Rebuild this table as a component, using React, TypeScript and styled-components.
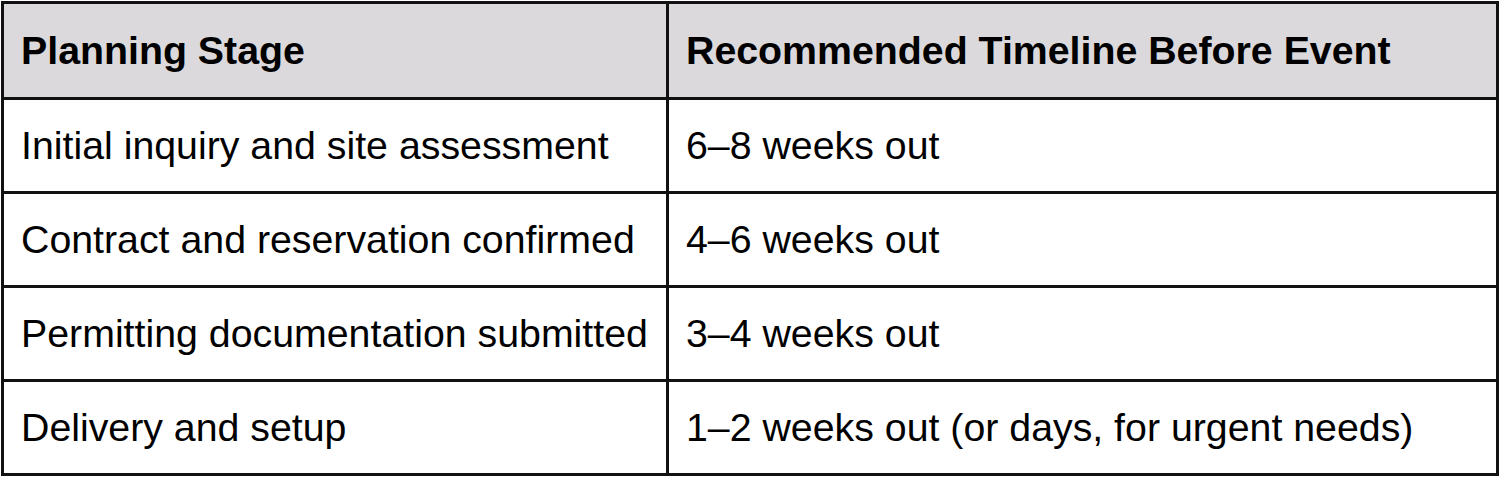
import React from "react";
import styled, { createGlobalStyle } from "styled-components";

const Global = createGlobalStyle`
  html, body { margin: 0; padding: 0; background: #ffffff; }
  body { font-family: "Liberation Sans", Arial, sans-serif; color: #000; }
`;

const Page = styled.div`
  padding: 1px 0 0 1px;
`;

const Table = styled.table`
  border-collapse: separate;
  border-spacing: 0;
  border-top: 3px solid #111111;
  border-left: 3px solid #111111;
  table-layout: fixed;
  width: 1498px;
`;

const Col = styled.col<{ $w: number }>`
  width: ${(p) => p.$w}px;
`;

const HeadCell = styled.th`
  background: #dbd9dc;
  height: 93px;
  padding: 0 0 0 17px;
  text-align: left;
  vertical-align: middle;
  font-size: 39.3px;
  font-weight: 700;
  border-right: 3px solid #111111;
  border-bottom: 3px solid #111111;
  box-sizing: content-box;
  white-space: nowrap;
`;

const Cell = styled.td`
  height: 91px;
  padding: 0 0 0 17px;
  text-align: left;
  vertical-align: middle;
  font-size: 39.3px;
  font-weight: 400;
  border-right: 3px solid #111111;
  border-bottom: 3px solid #111111;
  box-sizing: content-box;
  white-space: nowrap;
`;

const rows: [string, string][] = [
  ["Initial inquiry and site assessment", "6–8 weeks out"],
  ["Contract and reservation confirmed", "4–6 weeks out"],
  ["Permitting documentation submitted", "3–4 weeks out"],
  ["Delivery and setup", "1–2 weeks out (or days, for urgent needs)"],
];

export default function App() {
  return (
    <>
      <Global />
      <Page>
        <Table>
          <colgroup>
            <Col $w={665} />
            <Col $w={830} />
          </colgroup>
          <thead>
            <tr>
              <HeadCell>Planning Stage</HeadCell>
              <HeadCell>Recommended Timeline Before Event</HeadCell>
            </tr>
          </thead>
          <tbody>
            {rows.map(([a, b]) => (
              <tr key={a}>
                <Cell>{a}</Cell>
                <Cell>{b}</Cell>
              </tr>
            ))}
          </tbody>
        </Table>
      </Page>
    </>
  );
}
